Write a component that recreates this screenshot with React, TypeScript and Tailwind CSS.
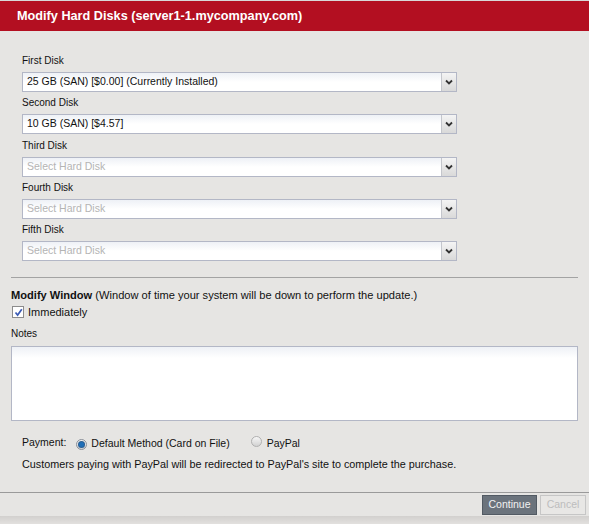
import React from 'react'

const disks = [
  { label: 'First Disk', value: '25 GB (SAN) [$0.00] (Currently Installed)' },
  { label: 'Second Disk', value: '10 GB (SAN) [$4.57]' },
  { label: 'Third Disk', value: '' },
  { label: 'Fourth Disk', value: '' },
  { label: 'Fifth Disk', value: '' },
]

function SelectBox({ value }: { value: string }) {
  return (
    <div className="flex h-[20px] w-[435px] border border-[#b3b7c6] bg-gradient-to-b from-[#eef1f6] via-white to-white">
      <div
        className={`flex-1 flex items-center pl-[4px] text-[10.5px] ${
          value ? 'text-[#111]' : 'text-[#b4b4b4]'
        }`}
      >
        {value || 'Select Hard Disk'}
      </div>
      <div className="w-[15px] flex items-center justify-center border-l border-[#c4c6cc] bg-gradient-to-b from-[#f4f4f4] to-[#d9d9d9]">
        <svg width="8" height="6" viewBox="0 0 8 6">
          <path d="M1 1.5 L4 4.5 L7 1.5" fill="none" stroke="#333" strokeWidth="1.8" />
        </svg>
      </div>
    </div>
  )
}

function Radio({ checked }: { checked: boolean }) {
  return (
    <span
      className={`inline-flex items-center justify-center w-[11px] h-[11px] rounded-full border ${
        checked
          ? 'border-[#8a9099] bg-gradient-to-b from-[#f2f2f2] to-[#cfd2d6]'
          : 'border-[#b0b0b0] bg-gradient-to-b from-[#f6f6f6] to-[#d2d2d2]'
      }`}
    >
      {checked && (
        <span className="w-[5px] h-[5px] rounded-full bg-[#1f6fb8] shadow-[0_0_0_1px_#2a5f93]" />
      )}
    </span>
  )
}

export default function App() {
  return (
    <div className="h-[524px] w-[589px] flex flex-col bg-[#e6e5e3] text-[#111] font-['Liberation_Sans',Arial,sans-serif] overflow-hidden">
      {/* Header */}
      <div className="h-[31px] shrink-0 border-t border-[#d8d8d8] bg-[#b30f21] flex items-center pl-[17px] pt-[1px]">
        <h1 className="text-white font-bold text-[12.7px]">
          Modify Hard Disks (server1-1.mycompany.com)
        </h1>
      </div>

      {/* Disks */}
      <div className="pt-[24px] pl-[22px] flex flex-col">
        {disks.map((d) => (
          <div key={d.label} className="flex flex-col pb-[5.25px]">
            <div className="h-[12px] leading-[12px] text-[10px] mb-[5px]">{d.label}</div>
            <SelectBox value={d.value} />
          </div>
        ))}
      </div>

      <div className="mt-[11px] mx-[11px] h-px bg-[#a3a3a3]" />

      {/* Modify window */}
      <div className="px-[11px] flex flex-col">
        <div className="mt-[10px] h-[14px] leading-[14px] text-[11.1px]">
          <span className="font-bold">Modify Window</span> (Window of time your system will be down to
          perform the update.)
        </div>
        <div className="mt-[4px] h-[12px] flex items-center gap-[4px]">
          <span className="ml-px w-[12px] h-[12px] border border-[#8c8c8c] bg-white flex items-center justify-center">
            <svg width="9" height="9" viewBox="0 0 9 9">
              <path d="M1.5 4.5 L3.6 7 L7.8 1.2" fill="none" stroke="#3b5bb5" strokeWidth="1.7" />
            </svg>
          </span>
          <span className="text-[11px] leading-[12px]">Immediately</span>
        </div>
        <div className="mt-[10px] h-[12px] leading-[12px] text-[10px]">Notes</div>
        <div className="mt-[6px] h-[75px] w-[567px] border border-[#b3b7c6] bg-gradient-to-b from-[#eef1f6] via-white via-[15%] to-white" />
      </div>

      {/* Payment */}
      <div className="pl-[22px] flex flex-col">
        <div className="mt-[16px] h-[14px] flex items-center text-[10.5px]">
          <span className="-mt-[3px] mr-[10px]">Payment:</span>
          <Radio checked />
          <span className="ml-[4px]">Default Method (Card on File)</span>
          <span className="ml-[21px]">
            <Radio checked={false} />
          </span>
          <span className="ml-[5px]">PayPal</span>
        </div>
        <div className="mt-[6px] h-[14px] leading-[14px] text-[10.8px]">
          Customers paying with PayPal will be redirected to PayPal&apos;s site to complete the
          purchase.
        </div>
      </div>

      <div className="flex-1" />

      {/* Footer */}
      <div className="h-px bg-[#9a9a9a] shrink-0" />
      <div className="h-[23px] shrink-0 flex items-start justify-end gap-[3px] pt-[2px] pr-[3px]">
        <button className="h-[20px] w-[55px] border border-[#525a63] bg-[#6b737c] text-[10.5px] text-[#f2f2f2]">
          Continue
        </button>
        <button className="h-[20px] w-[46px] border border-[#c6c6c6] bg-[#e8e7e5] text-[10.5px] text-[#bdbdbd]">
          Cancel
        </button>
      </div>
      <div className="h-[8px] shrink-0 bg-gradient-to-b from-[#d2d0ce] to-[#e2e0de]" />
    </div>
  )
}
